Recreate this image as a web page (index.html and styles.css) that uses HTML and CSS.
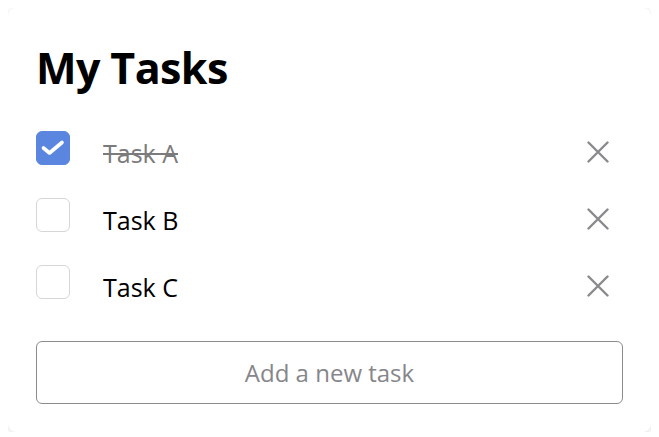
FILE: index.html
```html
<!DOCTYPE html>
<html lang="en">
<head>
<meta charset="utf-8">
<title>My Tasks</title>
<link rel="stylesheet" href="styles.css">
</head>
<body>
<main class="card">
  <h1 class="title">My Tasks</h1>
  <ul class="tasks">
    <li class="task">
      <span class="check check-on">
        <svg width="34" height="34" viewBox="0 0 34 34"><path d="M7.5 17 L13.5 22 L26 11.5" fill="none" stroke="#fff" stroke-width="3.6" stroke-linecap="round" stroke-linejoin="round"/></svg>
      </span>
      <span class="label label-done">Task A</span>
      <button class="remove" type="button" aria-label="Delete">
        <svg width="22" height="22" viewBox="0 0 22 22"><path d="M1.5 1.5 L20.5 20.5 M20.5 1.5 L1.5 20.5" stroke="#8a8a8e" stroke-width="2.4" stroke-linecap="round"/></svg>
      </button>
    </li>
    <li class="task">
      <span class="check"></span>
      <span class="label">Task B</span>
      <button class="remove" type="button" aria-label="Delete">
        <svg width="22" height="22" viewBox="0 0 22 22"><path d="M1.5 1.5 L20.5 20.5 M20.5 1.5 L1.5 20.5" stroke="#8a8a8e" stroke-width="2.4" stroke-linecap="round"/></svg>
      </button>
    </li>
    <li class="task">
      <span class="check"></span>
      <span class="label">Task C</span>
      <button class="remove" type="button" aria-label="Delete">
        <svg width="22" height="22" viewBox="0 0 22 22"><path d="M1.5 1.5 L20.5 20.5 M20.5 1.5 L1.5 20.5" stroke="#8a8a8e" stroke-width="2.4" stroke-linecap="round"/></svg>
      </button>
    </li>
  </ul>
  <input class="new-task" type="text" placeholder="Add a new task">
</main>
</body>
</html>
```

FILE: styles.css
```css
* { box-sizing: border-box; }
html, body { background: #ffffff; }
body {
  margin: 8px;
  font-family: "Open Sans", "Noto Sans", sans-serif;
  color: #000;
}
.card {
  background: #fff;
  border-radius: 8px;
  box-shadow: 0 1px 5px rgba(0,0,0,0.14);
  padding: 30px 28px 28px 28px;
  height: 424px;
}
.title {
  margin: 0 0 33px 0;
  font-size: 43px;
  font-weight: 700;
  line-height: 60px;
  letter-spacing: -0.6px;
}
.tasks {
  list-style: none;
  margin: 0;
  padding: 0;
  display: flex;
  flex-direction: column;
  gap: 22px;
}
.task {
  display: flex;
  align-items: center;
  height: 45px;
}
.check {
  align-self: flex-start;
  width: 34px;
  height: 34px;
  border: 1px solid #d6d6d6;
  border-radius: 6px;
  flex: none;
  display: flex;
}
.check-on {
  background: #5a86e0;
  border-color: #5a86e0;
}
.check-on svg { margin: -1px; }
.label {
  margin-left: 33px;
  font-size: 25px;
  line-height: 45px;
  flex: 1;
}
.label-done {
  color: #7b7b7b;
  text-decoration: line-through;
  text-decoration-thickness: 2px;
}
.remove {
  border: 0;
  background: none;
  padding: 0;
  width: 22px;
  height: 22px;
  margin-right: 14px;
  margin-bottom: 4px;
  display: flex;
}
.new-task {
  display: block;
  width: 100%;
  height: 63px;
  margin-top: 31px;
  border: 1px solid #8c8c8c;
  border-radius: 6px;
  font-family: "Open Sans", "Noto Sans", sans-serif;
  font-size: 24px;
  font-weight: 500;
  text-align: center;
  padding: 0 12px;
  outline: none;
}
.new-task::placeholder { color: #86868a; }
```
